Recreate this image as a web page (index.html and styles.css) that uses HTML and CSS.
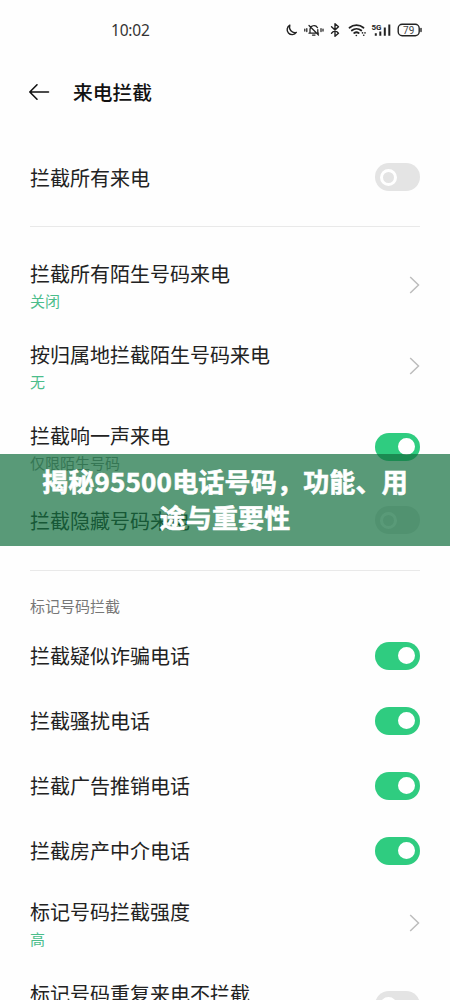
FILE: index.html
```
<!DOCTYPE html>
<html lang="zh-CN">
<head>
<meta charset="utf-8">
<title>来电拦截</title>
<link rel="stylesheet" href="styles.css">
</head>
<body>
<main class="phone">
  <div class="status">
    <span class="time">10:02</span>
    <svg class="status-icons" width="140" height="20" viewBox="0 0 140 20" fill="none" stroke="#222" stroke-width="1.4" stroke-linecap="round" stroke-linejoin="round">
      <path d="M9.800 5.200a5 5 0 1 0 6.500 7.200a5.500 5.500 0 0 1-6.500-7.200z" transform="translate(-1.500 0)"/>
      <path d="M28.500 13.200h9.500M29.500 13v-3.500a4 4 0 0 1 7.500-1.800M37.300 9.500v3.500M32 15h2.500M28.500 5.500l9.500 9.500M26.300 8.500v3M40.500 8.500v3M24.300 9v2M42.500 9v2" stroke-width="1.250" transform="translate(-1 0)"/>
      <path d="M51 6.800l7 6.500-3.500 3v-12.500l3.500 3-7 6.500" transform="translate(-1 0)"/>
      <path d="M68 7.700a11 11 0 0 1 14 0M70.300 10.500a7.500 7.500 0 0 1 9.500 0M72.700 13a4 4 0 0 1 4.500 0" stroke-width="1.800"/>
      <path d="M74.800 15.500h.1M81 12.800v.1M83.500 12.800v.1M82.200 15.200h.1" stroke-width="1.600"/>
      <path d="M94.300 13.300v2.500M98.800 11.500v4.300M103.300 7.500v8.300M107.800 4.500v11.300" stroke-width="2" stroke-linecap="butt"/>
      <text class="network" x="90" y="10">5G</text>
      <rect x="116.700" y="4.200" width="21" height="11.500" rx="4"/>
      <path d="M139.500 8.500v3" stroke-width="1.400"/>
      <text class="charge" x="127.200" y="13.500">79</text>
    </svg>
  </div>
  <header class="header">
    <svg width="22" height="20" viewBox="0 0 22 20" fill="none" stroke="#111" stroke-width="1.600" stroke-linecap="round" stroke-linejoin="round"><path d="M20.500 10H1.800M9 2.800L1.800 10L9 17.200"/></svg>
    <h1>来电拦截</h1>
  </header>
  <section class="group first">
    <div class="row medium"><span class="label">拦截所有来电</span><i class="toggle"></i></div>
  </section>
  <section class="group middle">
    <div class="row tall"><div class="copy"><span class="label">拦截所有陌生号码来电</span><span class="value">关闭</span></div><svg class="chevron" viewBox="0 0 11 18"><path d="M1.200 1l8.300 8-8.300 8"/></svg></div>
    <div class="row tall"><div class="copy"><span class="label">按归属地拦截陌生号码来电</span><span class="value">无</span></div><svg class="chevron" viewBox="0 0 11 18"><path d="M1.200 1l8.300 8-8.300 8"/></svg></div>
    <div class="row tall"><div class="copy"><span class="label">拦截响一声来电</span><span class="value muted">仅限陌生号码</span></div><i class="toggle on"></i></div>
    <div class="row medium"><span class="label">拦截隐藏号码来电</span><i class="toggle"></i></div>
  </section>
  <section class="group last">
    <h2>标记号码拦截</h2>
    <div class="row"><span class="label">拦截疑似诈骗电话</span><i class="toggle on"></i></div>
    <div class="row"><span class="label">拦截骚扰电话</span><i class="toggle on"></i></div>
    <div class="row"><span class="label">拦截广告推销电话</span><i class="toggle on"></i></div>
    <div class="row"><span class="label">拦截房产中介电话</span><i class="toggle on"></i></div>
    <div class="row tall"><div class="copy"><span class="label">标记号码拦截强度</span><span class="value">高</span></div><svg class="chevron" viewBox="0 0 11 18"><path d="M1.200 1l8.300 8-8.300 8"/></svg></div>
    <div class="row tall"><div class="copy"><span class="label">标记号码重复来电不拦截</span></div><i class="toggle"></i></div>
  </section>
  <div class="banner">揭秘95500电话号码，功能、用<br>途与重要性</div>
</main>
</body>
</html>
```
FILE: styles.css
```
*, *::after { box-sizing: border-box; }
body {
  margin: 0;
  background: #fefefe;
  color: #222;
  font-family: "Noto Sans CJK SC", sans-serif;
}
.phone {
  position: relative;
  width: 450px;
  height: 1000px;
  overflow: hidden;
}
.status {
  display: flex;
  align-items: center;
  justify-content: space-between;
  height: 60px;
  padding: 0 28px 0 111px;
}
.time { font: 15.500px "Noto Sans", sans-serif; color: #333; letter-spacing: -.2px; }
.status-icons { flex: none; width: 141px; overflow: visible; }
.network { font: bold 8px Roboto, sans-serif; fill: #222; stroke: none; }
.charge { font: 10px Roboto, sans-serif; fill: #444; stroke: none; text-anchor: middle; }
.header {
  display: flex;
  align-items: center;
  gap: 23px;
  height: 64px;
  padding-left: 28px;
}
h1 { margin: 0; font-size: 19.800px; font-weight: 500; line-height: 28px; color: #111; }
.group { margin: 0 30px; }
.first { padding: 20px 0 16px; }
.middle {
  padding: 17px 0;
  border-top: 1px solid #e9e9e9;
  border-bottom: 1px solid #e9e9e9;
}
.last { padding-top: 21px; }
.row {
  display: flex;
  align-items: center;
  justify-content: space-between;
  height: 65px;
}
.medium { height: 66px; }
.medium .label { padding-top: 2px; }
.tall { height: 81px; }
.last .tall { height: 80px; }
.last .tall + .tall { height: 82px; align-items: flex-start; padding-top: 28px; }
.last .tall + .tall .copy { margin-top: -15px; }
.copy { display: flex; flex-direction: column; padding-top: 4px; }
.label { font-size: 20px; line-height: 28px; white-space: nowrap; }
.value { font-size: 15px; line-height: 26px; color: #4bbd8b; }
.muted { color: #888; }
h2 { margin: 0 0 3px; font-size: 15px; font-weight: 400; line-height: 28px; color: #777; }
.toggle {
  display: flex;
  align-items: center;
  flex: none;
  width: 45px;
  height: 28px;
  padding: 0 5px;
  border-radius: 14px;
  background: #e4e4e4;
}
.toggle::after {
  content: "";
  width: 17px;
  height: 17px;
  border: 3px solid #fff;
  border-radius: 50%;
}
.on { justify-content: flex-end; background: #2fcc80; }
.on::after { background: #fff; }
.chevron { width: 11px; height: 18px; fill: none; stroke: #bdbdbd; stroke-width: 1.5; }
.banner {
  position: absolute;
  top: 454px;
  left: 0;
  width: 100%;
  height: 92px;
  padding: 9px 0;
  background: rgba(19, 111, 62, .7);
  color: #fff;
  font-size: 26px;
  font-weight: 700;
  line-height: 36px;
  letter-spacing: .2px;
  text-align: center;
  -webkit-text-stroke: .6px #fff;
}
```
